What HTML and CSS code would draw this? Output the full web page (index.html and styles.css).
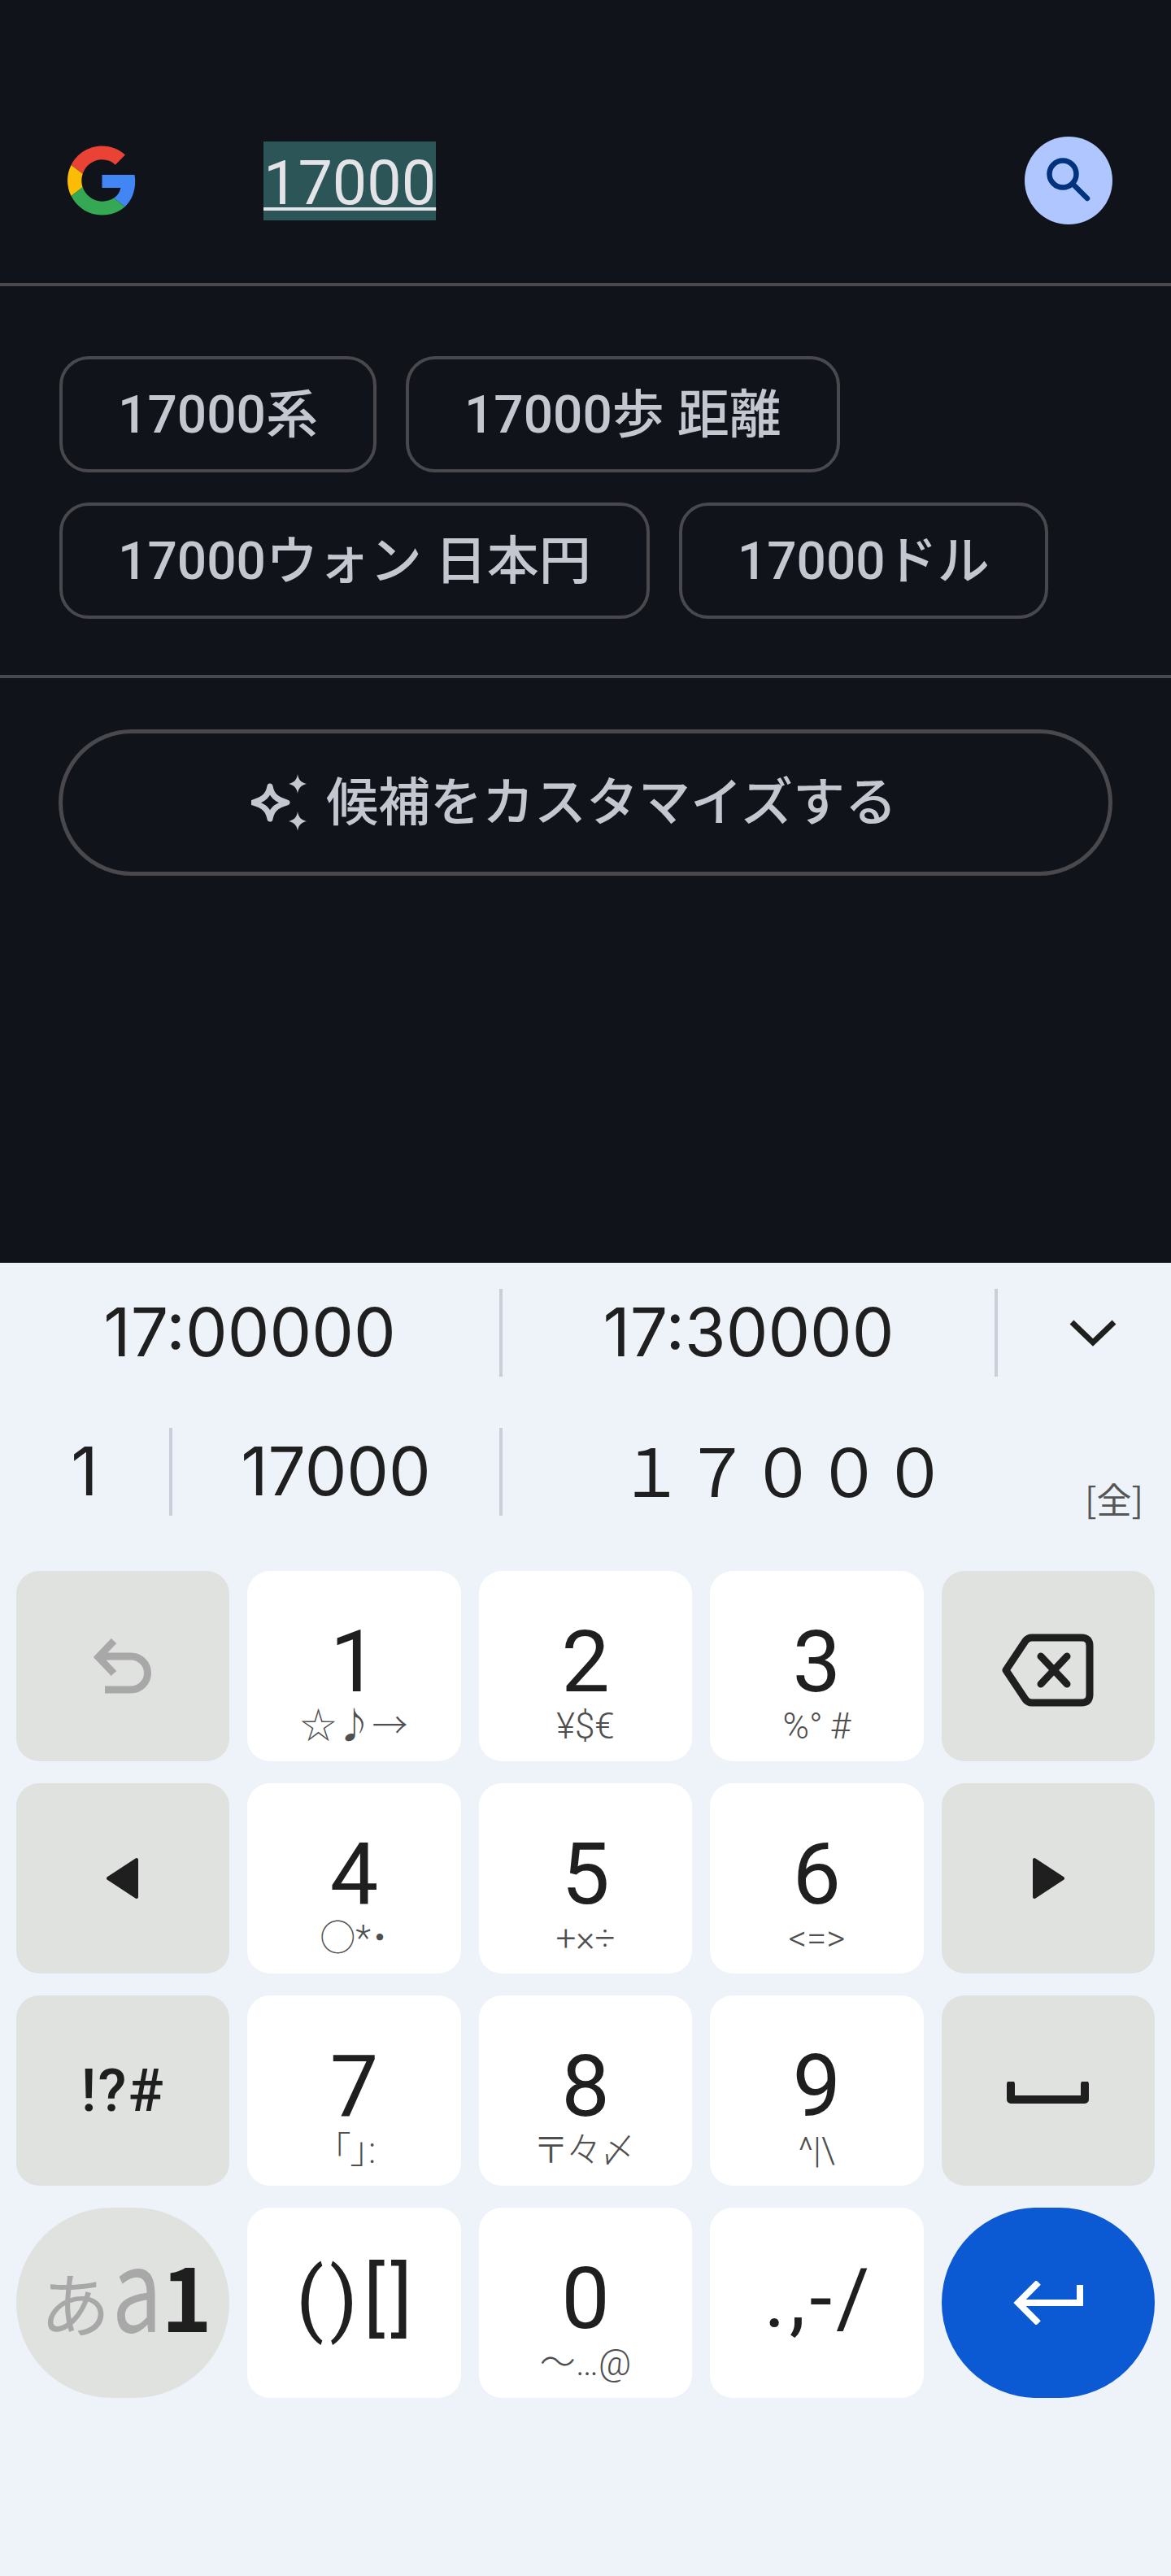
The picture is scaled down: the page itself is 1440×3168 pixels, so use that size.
FILE: index.html
```html
<!DOCTYPE html>
<html lang="ja">
<head>
<meta charset="utf-8">
<title>Google 検索</title>
<link rel="stylesheet" href="styles.css">
</head>
<body>
<div class="screen">
  <main class="app">
    <header class="searchbar">
      <svg class="glogo" viewBox="0 0 48 48" aria-hidden="true">
        <path fill="#EA4335" d="M24 9.5c3.54 0 6.71 1.22 9.21 3.6l6.85-6.85C35.9 2.38 30.47 0 24 0 14.62 0 6.51 5.38 2.56 13.22l7.98 6.19C12.43 13.72 17.74 9.5 24 9.5z"/>
        <path fill="#4285F4" d="M46.98 24.55c0-1.57-.15-3.09-.38-4.55H24v9.02h12.94c-.58 2.96-2.26 5.48-4.78 7.18l7.73 6c4.51-4.18 7.09-10.36 7.09-17.65z"/>
        <path fill="#FBBC05" d="M10.53 28.59c-.48-1.45-.76-2.99-.76-4.59s.27-3.14.76-4.59l-7.98-6.19C.92 16.46 0 20.12 0 24c0 3.88.92 7.54 2.56 10.78l7.97-6.19z"/>
        <path fill="#34A853" d="M24 48c6.48 0 11.93-2.13 15.89-5.81l-7.73-6c-2.15 1.45-4.92 2.3-8.16 2.3-6.26 0-11.57-4.22-13.47-9.91l-7.98 6.19C6.51 42.62 14.62 48 24 48z"/>
      </svg>
      <span class="query">17000</span>
      <span class="search-btn">
        <svg viewBox="0 0 108 108" class="search-icon" aria-hidden="true">
          <circle cx="47" cy="46" r="16.5" fill="none" stroke="#00337c" stroke-width="6.5"/>
          <path d="M59 58 L77 76" fill="none" stroke="#00337c" stroke-width="6.5" stroke-linecap="round"/>
        </svg>
      </span>
    </header>
    <hr class="rule">
    <section class="chips">
      <div class="chip-row">
        <span class="chip">17000系</span>
        <span class="chip">17000歩 距離</span>
      </div>
      <div class="chip-row">
        <span class="chip">17000ウォン 日本円</span>
        <span class="chip">17000ドル</span>
      </div>
    </section>
    <hr class="rule">
    <div class="customize-wrap">
      <div class="customize">
        <svg class="sparkle" viewBox="0 0 68 70" aria-hidden="true">
          <path d="M23 15 C25 26 30 31 44 35 C30 39 25 44 23 55 C21 44 16 39 2 35 C16 31 21 26 23 15 Z" fill="none" stroke="#c4c6d0" stroke-width="7" stroke-linejoin="round"/>
          <path d="M57 0 C58 7 61 10 68 12 C61 14 58 17 57 24 C56 17 53 14 46 12 C53 10 56 7 57 0 Z" fill="#c4c6d0"/>
          <path d="M57 46 C58 53 61 56 68 58 C61 60 58 63 57 70 C56 63 53 60 46 58 C53 56 56 53 57 46 Z" fill="#c4c6d0"/>
        </svg>
        <span class="customize-label">候補をカスタマイズする</span>
      </div>
    </div>
  </main>

  <section class="ime">
    <div class="cands cands-a">
      <span class="cand">17:00000</span>
      <i class="sep"></i>
      <span class="cand">17:30000</span>
      <i class="sep"></i>
      <span class="cand">
        <svg class="chev" viewBox="0 0 60 36" aria-hidden="true"><path d="M4 5 L30 30 L56 5" fill="none" stroke="#1f1f1f" stroke-width="7"/></svg>
      </span>
    </div>
    <div class="cands cands-b">
      <span class="cand">1</span>
      <i class="sep"></i>
      <span class="cand">17000</span>
      <i class="sep"></i>
      <span class="cand cand-wide">
        <span class="full">１７０００</span>
        <span class="tag">[全]</span>
      </span>
    </div>

    <div class="keys">
      <div class="key fn">
        <svg class="ic-undo" viewBox="0 0 72 68" aria-hidden="true"><path d="M25 3 L6 23 L25 43 M6 22 H46 A20.5 20.5 0 0 1 46 63 H14" fill="none" stroke="#a8a8a8" stroke-width="9"/></svg>
      </div>
      <div class="key"><span class="num">1</span><span class="sub">☆♪→</span></div>
      <div class="key"><span class="num">2</span><span class="sub">¥$€</span></div>
      <div class="key"><span class="num">3</span><span class="sub">%°&thinsp;#</span></div>
      <div class="key fn">
        <svg class="ic-bs" viewBox="0 0 113 90" aria-hidden="true">
          <path d="M5 45 L29 9 Q32 5 37 5 H98 Q108 5 108 15 V75 Q108 85 98 85 H37 Q32 85 29 81 Z" fill="none" stroke="#1f1f1f" stroke-width="9" stroke-linejoin="round"/>
          <path d="M48 28 L80 62 M80 28 L48 62" fill="none" stroke="#1f1f1f" stroke-width="9" stroke-linecap="round"/>
        </svg>
      </div>

      <div class="key fn">
        <svg class="ic-tri" viewBox="0 0 42 52" aria-hidden="true"><path d="M38 3 V49 L3 26 Z" fill="#1f1f1f" stroke="#1f1f1f" stroke-width="4" stroke-linejoin="round"/></svg>
      </div>
      <div class="key"><span class="num">4</span><span class="sub">○*・</span></div>
      <div class="key"><span class="num">5</span><span class="sub">+×÷</span></div>
      <div class="key"><span class="num">6</span><span class="sub">&lt;=&gt;</span></div>
      <div class="key fn">
        <svg class="ic-tri" viewBox="0 0 42 52" aria-hidden="true"><path d="M4 3 V49 L39 26 Z" fill="#1f1f1f" stroke="#1f1f1f" stroke-width="4" stroke-linejoin="round"/></svg>
      </div>

      <div class="key fn"><span class="sym-label">!?#</span></div>
      <div class="key"><span class="num">7</span><span class="sub">「」:</span></div>
      <div class="key"><span class="num">8</span><span class="sub">〒々〆</span></div>
      <div class="key"><span class="num">9</span><span class="sub">^|\</span></div>
      <div class="key fn">
        <svg class="ic-space" viewBox="0 0 101 27" aria-hidden="true"><path d="M5 3 V22 H96 V3" fill="none" stroke="#1f1f1f" stroke-width="10" stroke-linejoin="round" stroke-linecap="round"/></svg>
      </div>

      <div class="key fn round"><span class="mode"><span class="dim kana">あ</span><span class="dim latin">a</span><span class="one">1</span></span></div>
      <div class="key"><span class="punct brackets">()[]</span></div>
      <div class="key"><span class="num">0</span><span class="sub">〜…@</span></div>
      <div class="key"><span class="punct">.,-/</span></div>
      <div class="key enter round">
        <svg class="ic-enter" viewBox="0 0 86 54" aria-hidden="true"><path d="M31 2 L6 27 L31 52 M6 27 H82 V5" fill="none" stroke="#fff" stroke-width="8"/></svg>
      </div>
    </div>
  </section>
</div>
</body>
</html>
```

FILE: styles.css
```css
* { box-sizing: border-box; }
html, body { margin: 0; padding: 0; }
body { background: #10131a; font-family: Roboto, "Noto Sans CJK JP", sans-serif; }
.screen { width: 1440px; height: 3168px; display: flex; flex-direction: column; overflow: hidden; }

.app { height: 1553px; background: #10131a; flex: none; }
.searchbar { height: 348px; padding: 96px 72px 0 83px; display: flex; align-items: center; }
.glogo { width: 85px; height: 88px; flex: none; margin-right: 156px; }
.query { display: inline-block; padding-top: 6px; font-size: 75.5px; font-weight: 400; line-height: 91px; color: #e3e3e8; background: #2b5557;
  text-decoration: underline; text-decoration-thickness: 4px; text-underline-offset: 4px; text-decoration-skip-ink: none; }
.search-btn { margin-left: auto; width: 108px; height: 108px; border-radius: 50%; background: #afc6ff; flex: none; }
.search-icon { display: block; width: 108px; height: 108px; }

.rule { height: 4px; margin: 0; border: 0; background: #48484d; }

.chips { padding: 86px 0 69px 73px; display: flex; flex-direction: column; gap: 37px; }
.chip-row { display: flex; gap: 36px; }
.chip { height: 143px; padding: 0 68px 12px; display: flex; align-items: center; border: 4px solid #48484d; border-radius: 36px;
  color: #c4c6d0; font-size: 64px; font-weight: 500; white-space: nowrap; }

.customize-wrap { padding: 63px 72px 0; }
.customize { height: 180px; border: 5px solid #48484d; border-radius: 90px; padding-right: 28px; display: flex; align-items: center; justify-content: center; gap: 24px;
  color: #c4c6d0; font-size: 64px; font-weight: 500; font-family: "Noto Sans CJK JP", sans-serif; }
.customize-label { padding-bottom: 12px; }
.sparkle { width: 68px; height: 70px; flex: none; }

.ime { flex: 1; background: #eef3fa; padding-top: 32px; color: #1f1f1f; }
.cands { display: grid; height: 108px; grid-template-rows: 108px; align-items: stretch; }
.cands-a { grid-template-columns: 614px 4px 605px 4px 1fr; }
.cands-b { grid-template-columns: 208px 4px 402px 4px 1fr; margin-top: 63px; }
.sep { background: #c9ced8; }
.cand { display: flex; align-items: center; justify-content: center; min-height: 0; font-family: Inter, sans-serif; font-weight: 400; font-size: 82px; line-height: 100px; letter-spacing: 0; white-space: nowrap; }
.cand-wide { justify-content: flex-start; }
.full { flex: 1; text-align: center; padding: 0 26px 8px 0; font-family: "Noto Sans CJK JP", sans-serif; font-weight: 400; font-size: 81px; line-height: 92px; letter-spacing: 0; }
.tag { align-self: flex-end; width: 72px; margin-right: 34px; color: #555; font-family: "Noto Sans CJK JP", sans-serif; font-weight: 400; font-size: 43px; letter-spacing: 0; line-height: 44px; }
.chev { width: 60px; height: 36px; margin-left: 21px; }

.keys { margin-top: 68px; padding: 0 20px; display: grid; grid-template-columns: repeat(5, 1fr); grid-auto-rows: 234px; gap: 27px 22px; }
.key { background: #fff; border-radius: 28px; display: flex; flex-direction: column; align-items: center; padding-top: 62px; }
.key.fn { background: #e0e2df; justify-content: center; padding-top: 0; }
.key.round { border-radius: 117px; }
.key.enter { background: #0b5ad4; justify-content: center; padding-top: 0; }
.num { font-size: 106px; line-height: 100px; font-weight: 400; }
.sub { margin-top: 6px; height: 46px; line-height: 46px; font-size: 44px; color: #4f4f4f; font-family: Roboto, "Noto Sans CJK JP", sans-serif; font-feature-settings: "palt"; font-weight: 300; white-space: nowrap; }
.punct { font-size: 100px; line-height: 100px; font-weight: 400; letter-spacing: 5px; padding-left: 5px; }
.brackets { letter-spacing: 7px; padding-left: 7px; }
.sym-label { font-size: 72px; font-weight: 500; letter-spacing: 2px; }

.mode { display: flex; align-items: baseline; padding: 0 0 14px 8px; font-family: "Noto Sans CJK JP", sans-serif; }
.dim { color: #a8a8a8; }
.kana { font-size: 86px; font-weight: 400; }
.latin { display: inline-block; font-size: 140px; line-height: 100px; font-weight: 400; transform: scaleX(.78); margin: 0 -9px 0 -7px; }
.one { font-size: 106px; line-height: 100px; font-weight: 700; }

.ic-undo { width: 72px; height: 68px; }
.ic-bs { width: 113px; height: 90px; margin-top: 10px; }
.ic-tri { width: 42px; height: 52px; }
.ic-space { width: 101px; height: 27px; margin-top: 5px; }
.ic-enter { width: 86px; height: 54px; }
```
